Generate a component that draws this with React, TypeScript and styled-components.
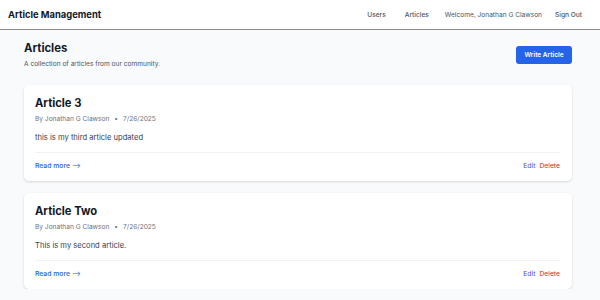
import React from "react";
import styled, { createGlobalStyle } from "styled-components";

const GlobalStyle = createGlobalStyle`
  * { box-sizing: border-box; }
  html, body { margin: 0; padding: 0; background: #f9fafb; }
  body { font-family: Inter, "Noto Sans", sans-serif; color: #111827; }
`;

const Header = styled.header`
  height: 30px;
  background: #ffffff;
  border-bottom: 1px solid #8c8c8c;
  display: flex;
  align-items: center;
  justify-content: space-between;
  padding: 0 18px 0 8px;
`;

const Brand = styled.div`
  font-size: 9.4px;
  font-weight: 700;
  color: #111827;
`;

const Nav = styled.nav`
  display: flex;
  align-items: center;
  gap: 13px;
  font-size: 6.6px;
  color: #4b5563;
`;

const NavLink = styled.a<{ $pad?: boolean }>`
  padding: ${(p) => (p.$pad ? "0 3px" : "0")};
  color: #4b5563;
  text-decoration: none;
  font-weight: 500;
`;

const Main = styled.main`
  padding: 10px 28px 0 24px;
`;

const PageHead = styled.div`
  display: flex;
  justify-content: space-between;
  align-items: flex-start;
`;

const Title = styled.h1`
  margin: 0;
  font-size: 11.3px;
  line-height: 16px;
  font-weight: 700;
  color: #111827;
`;

const Subtitle = styled.p`
  margin: 3px 0 0;
  font-size: 6.6px;
  line-height: 10px;
  color: #4b5563;
`;

const PrimaryButton = styled.button`
  margin-top: 6px;
  height: 18px;
  width: 56px;
  border: none;
  border-radius: 3px;
  background: #2563eb;
  color: #ffffff;
  font-family: inherit;
  font-size: 6.5px;
  font-weight: 600;
  padding: 0;
`;

const List = styled.div`
  margin-top: 16px;
  display: flex;
  flex-direction: column;
  gap: 12px;
`;

const Card = styled.article`
  background: #ffffff;
  border-radius: 5px;
  box-shadow: 0 1px 3px rgba(0, 0, 0, 0.1), 0 1px 2px rgba(0, 0, 0, 0.06);
  padding: 10px 12px 10px 11px;
`;

const CardTitle = styled.h2`
  margin: 0;
  font-size: 11.2px;
  line-height: 16px;
  font-weight: 700;
  color: #111827;
`;

const Meta = styled.div`
  margin-top: 3px;
  display: flex;
  align-items: center;
  gap: 5px;
  font-size: 6.6px;
  line-height: 10px;
  color: #6b7280;
`;

const Body = styled.p`
  margin: 8px 0 0;
  font-size: 7.6px;
  line-height: 12px;
  color: #374151;
`;

const Footer = styled.div`
  margin-top: 8px;
  padding-top: 8px;
  border-top: 1px solid #f1f2f4;
  display: flex;
  justify-content: space-between;
  align-items: center;
  font-size: 6.8px;
  line-height: 10px;
`;

const ReadMore = styled.a`
  color: #2563eb;
  font-weight: 500;
  text-decoration: none;
`;

const Actions = styled.div`
  display: flex;
  gap: 4px;
`;

const Action = styled.a<{ $danger?: boolean }>`
  color: ${(p) => (p.$danger ? "#dc2626" : "#4f46e5")};
  text-decoration: none;
`;

const articles = [
  { title: "Article 3", body: "this is my third article updated" },
  { title: "Article Two", body: "This is my second article." },
];

export default function App() {
  return (
    <>
      <GlobalStyle />
      <Header>
        <Brand>Article Management</Brand>
        <Nav>
          <NavLink $pad>Users</NavLink>
          <NavLink $pad>Articles</NavLink>
          <span>Welcome, Jonathan G Clawson</span>
          <NavLink>Sign Out</NavLink>
        </Nav>
      </Header>
      <Main>
        <PageHead>
          <div>
            <Title>Articles</Title>
            <Subtitle>A collection of articles from our community.</Subtitle>
          </div>
          <PrimaryButton>Write Article</PrimaryButton>
        </PageHead>
        <List>
          {articles.map((a) => (
            <Card key={a.title}>
              <CardTitle>{a.title}</CardTitle>
              <Meta>
                <span>By Jonathan G Clawson</span>
                <span>•</span>
                <span>7/26/2025</span>
              </Meta>
              <Body>{a.body}</Body>
              <Footer>
                <ReadMore>Read more ⟶</ReadMore>
                <Actions>
                  <Action>Edit</Action>
                  <Action $danger>Delete</Action>
                </Actions>
              </Footer>
            </Card>
          ))}
        </List>
      </Main>
    </>
  );
}
